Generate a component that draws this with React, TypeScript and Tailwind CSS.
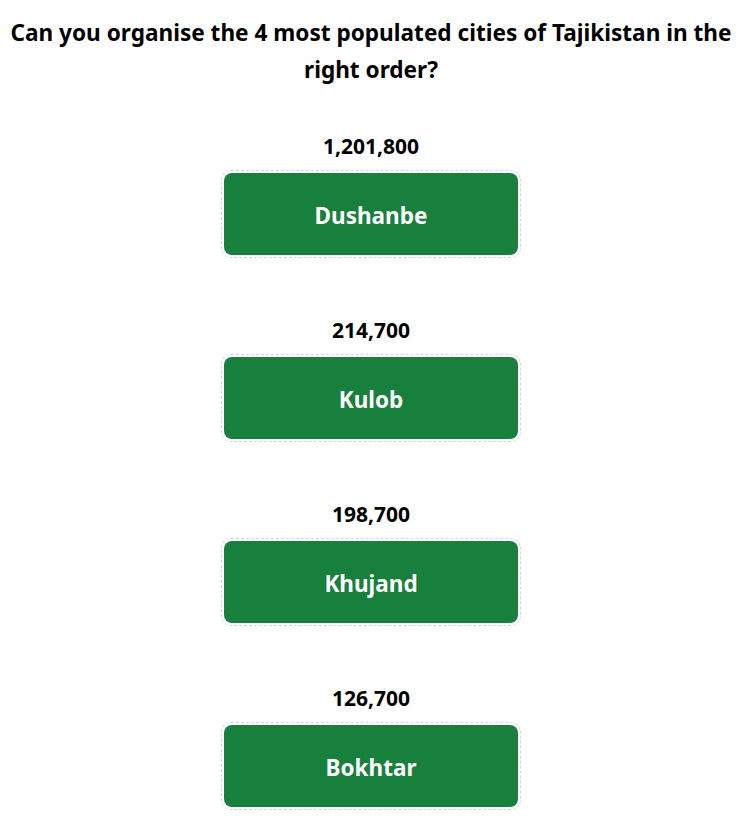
const cities = [
  { name: 'Dushanbe', population: '1,201,800' },
  { name: 'Kulob', population: '214,700' },
  { name: 'Khujand', population: '198,700' },
  { name: 'Bokhtar', population: '126,700' },
];

export default function App() {
  return (
    <div
      className="min-h-screen bg-white pl-[4px] text-black"
      style={{ fontFamily: '"Segoe UI", "Noto Sans", "Open Sans", sans-serif' }}
    >
      <h1 className="pt-[14px] px-1 text-center text-[22.6px] font-bold leading-[37px]">
        Can you organise the 4 most populated cities of Tajikistan in the right order?
      </h1>

      <div className="mt-[45px] flex flex-col items-center gap-[59px]">
        {cities.map((city) => (
          <div key={city.name} className="flex flex-col items-center">
            <p className="text-[21px] font-bold leading-[27px]">{city.population}</p>
            <div className="mt-[10px] w-[300px] rounded-[10px] border border-dashed border-gray-300 p-[2px]">
              <div className="flex h-[82px] items-center justify-center rounded-lg bg-[#17803d] pt-[4px] text-[22.5px] font-bold text-white">
                {city.name}
              </div>
            </div>
          </div>
        ))}
      </div>
    </div>
  );
}
